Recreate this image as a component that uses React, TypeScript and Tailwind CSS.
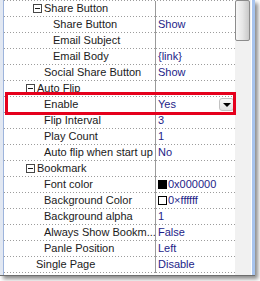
import React from 'react';

type Row = {
  name: string;
  value?: string;
  level: 1 | 2 | 3;
  group?: boolean;
  swatch?: string;
  editing?: boolean;
};

const ROWS: Row[] = [
  { name: 'Share Button', level: 2, group: true },
  { name: 'Share Button', value: 'Show', level: 3 },
  { name: 'Email Subject', level: 3 },
  { name: 'Email Body', value: '{link}', level: 3 },
  { name: 'Social Share Button', value: 'Show', level: 2 },
  { name: 'Auto Flip', level: 1, group: true },
  { name: 'Enable', value: 'Yes', level: 2, editing: true },
  { name: 'Flip Interval', value: '3', level: 2 },
  { name: 'Play Count', value: '1', level: 2 },
  { name: 'Auto flip when start up', value: 'No', level: 2 },
  { name: 'Bookmark', level: 1, group: true },
  { name: 'Font color', value: '0x000000', level: 2, swatch: 'black' },
  { name: 'Background Color', value: '0×ffffff', level: 2, swatch: 'white' },
  { name: 'Background alpha', value: '1', level: 2 },
  { name: 'Always Show Bookm...', value: 'False', level: 2 },
  { name: 'Panle Position', value: 'Left', level: 2 },
  { name: 'Single Page', value: 'Disable', level: 1 },
];

const textPad = { 1: 'pl-[32px]', 2: 'pl-[40px]', 3: 'pl-[49px]' };
const boxPad = { 1: 'pl-[22px]', 2: 'pl-[29px]', 3: 'pl-[38px]' };

// dotted separator, 1px dot every 3px like the WinForms grid
const Dots = () => (
  <div className="h-px bg-[linear-gradient(to_right,#9c9c9c_1px,transparent_1px)] bg-[length:3px_1px] bg-repeat-x" />
);

const MinusBox = () => (
  <span className="relative w-[9px] h-[9px] border border-[#474747] bg-white mr-[2px] shrink-0">
    <span className="absolute left-[1px] top-[3px] w-[5px] h-px bg-[#1a1a1a]" />
  </span>
);

export default function App() {
  return (
    <div className="relative w-[260px] h-[281px] bg-white overflow-hidden" style={{ fontFamily: '"Liberation Sans", Arial, sans-serif' }}>
      <div className="flex w-[255px] h-[276px] bg-white border-b border-[#6e6e6e] shadow-[3px_3px_4px_rgba(0,0,0,0.45)]">
        {/* window left edge */}
        <div className="w-[3px] bg-[#e2e8f2]" />
        <div className="w-px bg-[#9db4dc]" />

        {/* property grid */}
        <div className="w-[231px] text-[11px] leading-[15px]">
          <Dots />
          {ROWS.map((r, i) => (
            <div key={i}>
              <div className="flex h-[15px]">
                <div className={`w-[151px] flex items-center whitespace-nowrap overflow-hidden text-[#1a1a1a] ${r.group ? boxPad[r.level] : textPad[r.level]}`}>
                  {r.group && <MinusBox />}
                  <span>{r.name}</span>
                </div>
                <div className="w-px bg-[#9a9a9a]" />
                <div className="flex-1 flex items-center pl-[2px] text-[#1d1d88] whitespace-nowrap">
                  {r.swatch && (
                    <span className={`w-[9px] h-[9px] mr-[1px] border border-black ${r.swatch === 'black' ? 'bg-black' : 'bg-white'}`} />
                  )}
                  <span>{r.value}</span>
                  {r.editing && (
                    <span className="ml-auto mr-[1px] w-[15px] h-[13px] flex items-center justify-center bg-gradient-to-b from-[#fafafa] to-[#e2e2e2] border border-[#c2c2c2] rounded-[3px]">
                      <span className="w-0 h-0 border-l-[4px] border-r-[4px] border-t-[4px] border-l-transparent border-r-transparent border-t-black" />
                    </span>
                  )}
                </div>
              </div>
              <div className="flex">
                <div className="w-[151px]"><Dots /></div>
                <div className="w-px h-px bg-[#9a9a9a]" />
                <div className="flex-1"><Dots /></div>
              </div>
            </div>
          ))}
        </div>

        {/* scrollbar */}
        <div className="w-[16px] flex flex-col bg-[#f1f1f1]">
          <div className="w-[15px] h-[41px] border border-[#8c8c8c] rounded-[2px] bg-gradient-to-r from-[#f7f7f7] via-[#e6e6e6] to-[#c9c9c9]" />
        </div>

        {/* window right edge */}
        <div className="w-px bg-white" />
        <div className="w-[3px] bg-[#a8c4ee]" />
      </div>

      {/* highlight */}
      <div className="absolute left-[5px] top-[92px] w-[231px] h-[23px] border-[3px] border-[#e5001c]" />
    </div>
  );
}
